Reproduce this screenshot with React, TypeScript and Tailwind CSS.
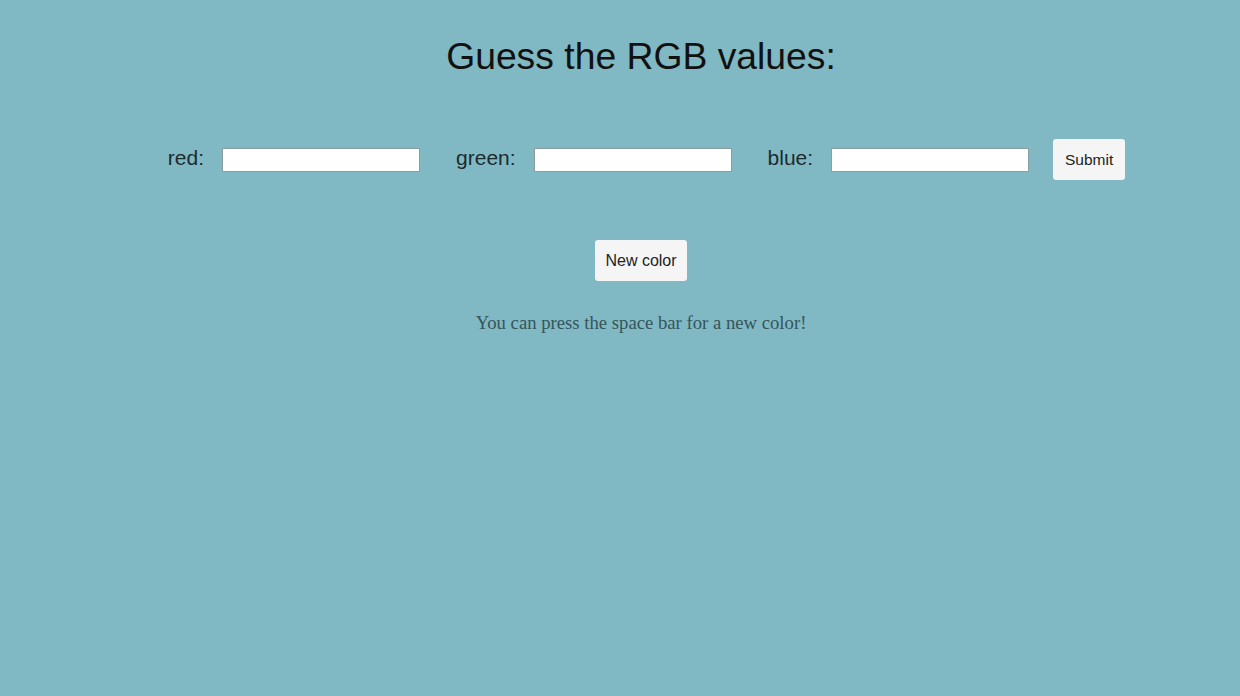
export default function App() {
  return (
    <div className="w-[1240px] h-[696px] bg-[#80b9c3] overflow-hidden" style={{ fontFamily: '"Liberation Sans", Arial, sans-serif' }}>
      <div className="flex flex-col items-center pl-[42px]">
        <h1 className="mt-[35px] text-[37.3px] leading-[42px] text-[#111]">Guess the RGB values:</h1>
        <div className="mt-[62px] flex items-center pl-[11px] text-[21px] text-[#1c2b2e]">
          <span className="mb-[4px]">red:</span>
          <input className="ml-[18px] w-[198px] h-[24px] bg-white border border-[#8a9ea2]" />
          <span className="ml-[36px] mb-[4px]">green:</span>
          <input className="ml-[18px] w-[198px] h-[24px] bg-white border border-[#8a9ea2]" />
          <span className="ml-[36px] mb-[4px]">blue:</span>
          <input className="ml-[18px] w-[198px] h-[24px] bg-white border border-[#8a9ea2]" />
          <button className="ml-[24px] w-[72px] h-[41px] bg-[#f5f5f5] rounded-[3px] text-[15.5px] text-[#222]">Submit</button>
        </div>
        <button className="mt-[60px] w-[92px] h-[41px] bg-[#f5f5f5] rounded-[3px] text-[16px] text-[#222]">New color</button>
        <p className="mt-[28px] text-[18.7px] text-[#35555b]" style={{ fontFamily: '"Liberation Serif", "Times New Roman", serif' }}>
          You can press the space bar for a new color!
        </p>
      </div>
    </div>
  );
}
